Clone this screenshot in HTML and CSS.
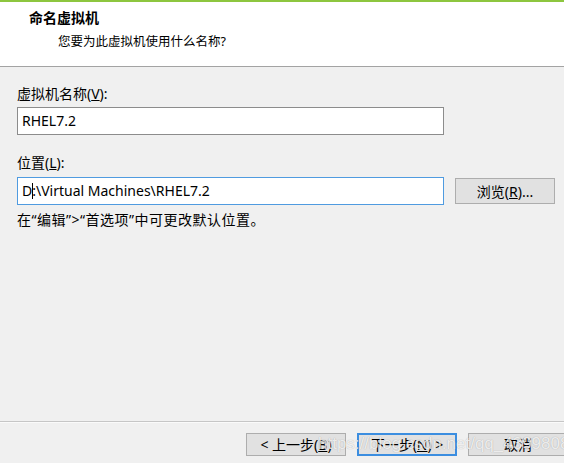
FILE: index.html
```html
<!DOCTYPE html>
<html lang="zh-CN">
<head>
<meta charset="utf-8">
<title>命名虚拟机</title>
<link rel="stylesheet" href="styles.css">
</head>
<body>
<div class="dialog">
  <header class="head">
    <div class="title">命名虚拟机</div>
    <div class="subtitle">您要为此虚拟机使用什么名称?</div>
  </header>
  <main class="content">
    <label class="label">虚拟机名称(<u>V</u>):</label>
    <div class="field">RHEL7.2</div>
    <label class="label label-loc">位置(<u>L</u>):</label>
    <div class="loc-row">
      <div class="field field-focus">D<span class="caret"></span>:\Virtual Machines\RHEL7.2</div>
      <button class="btn btn-browse">浏览(<u>R</u>)...</button>
    </div>
    <p class="hint">在“编辑”&gt;“首选项”中可更改默认位置。</p>
  </main>
  <footer class="foot">
    <button class="btn">&lt; 上一步(<u>B</u>)</button>
    <button class="btn btn-default">下一步(<u>N</u>) &gt;</button>
    <button class="btn">取消</button>
    <span class="watermark">https://blog.csdn.net/qq_43998088</span>
  </footer>
</div>
</body>
</html>
```
FILE: styles.css
```css
* { box-sizing: border-box; }
html, body {
  margin: 0;
  padding: 0;
  width: 564px;
  height: 463px;
  overflow: hidden;
  background: #f0f0f0;
}
body {
  font-family: "Noto Sans", "Noto Sans CJK SC", sans-serif;
  font-size: 14px;
  color: #000;
}
.dialog {
  display: flex;
  flex-direction: column;
  height: 463px;
  border-top: 2px solid #8dc63f;
}
.head {
  height: 65px;
  background: #fff;
  border-bottom: 1px solid #a3a3a3;
  padding: 6px 0 0 29px;
  flex: none;
}
.title {
  font-weight: bold;
  line-height: 20px;
  font-size: 14px;
}
.subtitle {
  margin: 4px 0 0 29px;
  line-height: 20px;
  font-size: 12.5px;
}
.content {
  flex: 1;
  padding: 17px 0 0 17px;
}
.label {
  display: block;
  line-height: 20px;
  margin-bottom: 3px;
}
.label-loc {
  margin-top: 18px;
  margin-bottom: 4px;
}
.field {
  width: 427px;
  height: 28px;
  background: #fff;
  border: 1px solid #8c8c8c;
  padding: 0 4px;
  line-height: 26px;
  white-space: nowrap;
}
.field-focus {
  border-color: #4f9be0;
}
.caret {
  display: inline-block;
  width: 1px;
  height: 16px;
  background: #000;
  vertical-align: -3px;
  margin-right: -1px;
}
.loc-row {
  display: flex;
  align-items: center;
  gap: 11px;
}
.btn {
  font-family: inherit;
  font-size: 14px;
  color: #000;
  background: #e1e1e1;
  border: 1px solid #adadad;
  width: 100px;
  height: 23px;
  padding: 0;
  line-height: 19px;
  flex: none;
  display: flex;
  align-items: center;
  justify-content: center;
  white-space: nowrap;
}
.btn-browse {
  height: 26px;
}
.btn-default {
  border-color: #3c8ee0;
  box-shadow: inset 0 0 0 1px #3c8ee0;
}
.hint {
  margin: 5px 0 0;
  line-height: 20px;
  letter-spacing: 0.5px;
}
.foot {
  position: relative;
  flex: none;
  height: 42px;
  border-top: 1px solid #c6c6c6;
  box-shadow: inset 0 1px 0 #fafafa;
  display: flex;
  align-items: flex-start;
  gap: 11px;
  padding: 11px 0 0 246px;
}
.watermark {
  position: absolute;
  left: 318px;
  top: 11px;
  font-family: "Liberation Sans", sans-serif;
  font-size: 17px;
  line-height: 22px;
  color: rgba(255, 255, 255, 0.8);
  text-shadow: 0 0 1px rgba(0, 0, 0, 0.3);
  white-space: nowrap;
  pointer-events: none;
}
```
